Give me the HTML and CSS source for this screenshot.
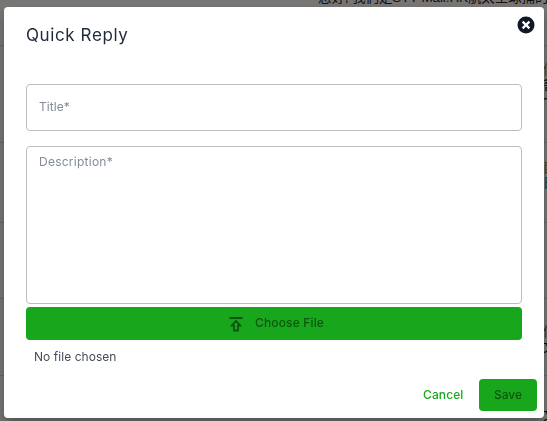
FILE: index.html
```html
<!DOCTYPE html>
<html lang="en">
<head>
<meta charset="utf-8">
<title>Quick Reply</title>
<link rel="stylesheet" href="styles.css">
</head>
<body>
<div class="page">
  <div class="row row-first"><span class="message">您好, 我們是STY-Mail.HK航太全球捕的出會人</span></div>
  <div class="row row-a"><span class="edge warm">信</span><span class="edge">書</span><span class="edge">七</span></div>
  <div class="row row-b"><span class="edge warm">目</span><span class="edge blue">日</span></div>
  <div class="row row-c"></div>
  <div class="row row-d"><span class="edge red">信</span><span class="edge">文</span></div>
  <div class="row row-e"><span class="edge">文</span></div>
</div>
<div class="backdrop"></div>
<form class="dialog">
  <header class="header">
    <h1 class="title">Quick Reply</h1>
    <svg class="close" viewBox="0 0 18 18" role="img" aria-label="Close"><circle cx="9" cy="9" r="8.5" fill="#111827"/><path d="M5.600 5.600l6.800 6.800M12.400 5.600l-6.800 6.800" stroke="#fff" stroke-width="2.2"/></svg>
  </header>
  <div class="field field-title"><span class="label-title">Title*</span></div>
  <div class="field field-description"><span class="label-description">Description*</span></div>
  <div class="choose">
    <svg class="upload" viewBox="0 0 14 16"><path d="M.5 2h13M7 4.800l4.300 4.700H9v5H5v-5H2.700z" fill="none" stroke="#0c5510" stroke-width="1.800"/></svg>
    <span class="choose-text">Choose File</span>
  </div>
  <div class="file-name"><span class="file-text">No file chosen</span></div>
  <footer class="actions">
    <span class="cancel"><span class="cancel-text">Cancel</span></span>
    <span class="save"><span class="save-text">Save</span></span>
  </footer>
</form>
</body>
</html>
```
FILE: styles.css
```css
* { box-sizing: border-box; }
body {
  margin: 0;
  width: 547px;
  height: 421px;
  overflow: hidden;
  font-family: Inter, "Open Sans", "Noto Sans CJK TC", sans-serif;
  font-size: 12px;
  color: #1e293b;
}
.page { height: 421px; overflow: hidden; background: #f8f7f5; }
.row {
  display: flex;
  flex-direction: column;
  align-items: flex-end;
  overflow: hidden;
  border-bottom: 1px solid #d4d4d4;
}
.row-first { height: 46px; align-items: flex-start; }
.row-a { height: 97px; padding-top: 15px; }
.row-b { height: 80px; padding-top: 16px; }
.row-c { height: 76px; }
.row-d { height: 77px; padding-top: 24px; }
.row-e { height: 46px; padding-top: 30px; }
.message {
  margin: -10px 0 0 318px;
  font: 13.5px/16px "Liberation Sans", "Noto Sans CJK TC", sans-serif;
  letter-spacing: -.1px;
  white-space: nowrap;
  color: #222;
}
.edge {
  width: 4px;
  height: 15px;
  overflow: hidden;
  font: 13px/15px "Noto Sans CJK TC", sans-serif;
  color: #111;
}
.warm { color: #c77420; }
.blue { color: #2462a8; }
.red { color: #b94030; }
.backdrop { position: fixed; inset: 0; background: rgba(0, 0, 0, .52); }
.dialog {
  position: fixed;
  left: 4px;
  top: 7px;
  width: 540px;
  height: 411px;
  padding: 0 22px;
  background: #fff;
  border-radius: 4px;
  box-shadow: 0 7px 12px rgba(0, 0, 0, .3);
}
.header { display: flex; justify-content: space-between; height: 77px; padding-top: 9px; }
.title {
  margin: 7px 0 0;
  font-size: 17px;
  line-height: 24px;
  font-weight: 400;
  letter-spacing: .6px;
  white-space: nowrap;
}
.close { width: 18px; height: 18px; margin-right: -13px; }
.field {
  display: flex;
  border: 1px solid #bdbdbd;
  border-radius: 4px;
  padding-left: 12px;
  color: #848b99;
  line-height: 16px;
}
.field-title { height: 47px; align-items: center; padding-bottom: 2px; }
.field-description { height: 158px; margin-top: 15px; padding-top: 7px; }
.label-title { letter-spacing: .05px; }
.label-description { letter-spacing: .25px; }
.choose {
  display: flex;
  align-items: center;
  height: 33px;
  margin-top: 3px;
  padding-left: 203px;
  border-radius: 4px;
  background: #18a71c;
  color: #0c5510;
}
.upload { width: 14px; height: 16px; margin-right: 12px; }
.choose-text { letter-spacing: .15px; font-weight: 500; padding-bottom: 2px; }
.file-name { height: 39px; padding: 9px 0 0 8px; line-height: 16px; color: #454c59; }
.file-text { letter-spacing: .05px; }
.actions { display: flex; justify-content: flex-end; align-items: center; margin-right: -15px; height: 32px; font-weight: 500; }
.cancel { width: 56px; color: #18a71c; padding-bottom: 2px; letter-spacing: .1px; }
.save {
  display: flex;
  align-items: center;
  justify-content: center;
  width: 58px;
  height: 32px;
  padding-bottom: 2px;
  border-radius: 4px;
  background: #18a71c;
  color: #0c5510;
}
```
